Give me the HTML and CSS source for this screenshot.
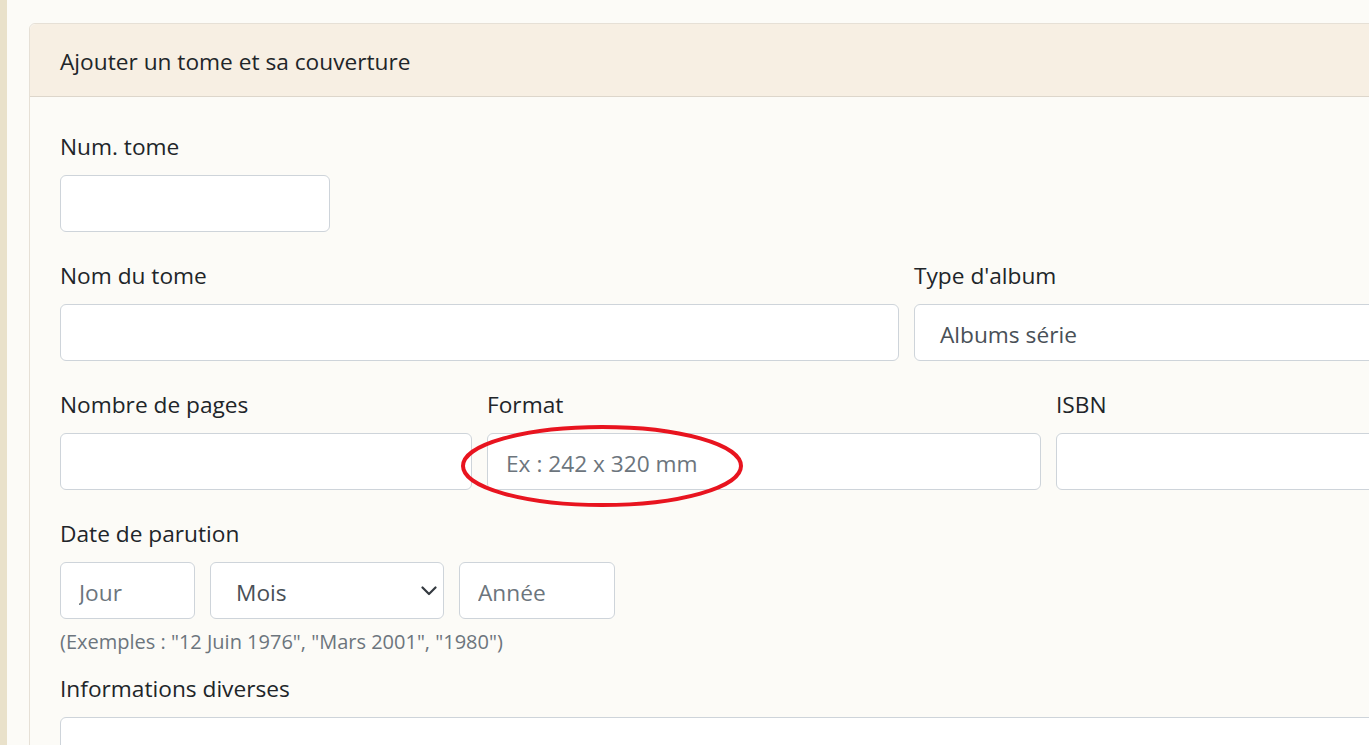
FILE: index.html
```html
<!DOCTYPE html>
<html lang="fr">
<head>
<meta charset="utf-8">
<title>Ajouter un tome</title>
<link rel="stylesheet" href="styles.css">
</head>
<body>
<div class="page">
  <div class="strip"></div>
  <main class="content">
    <section class="card">
      <header class="card-header">Ajouter un tome et sa couverture</header>
      <div class="card-body">
        <div class="group">
          <label class="label">Num. tome</label>
          <input class="control w-num" type="text">
        </div>
        <div class="row row-2">
          <div class="group">
            <label class="label">Nom du tome</label>
            <input class="control" type="text">
          </div>
          <div class="group">
            <label class="label">Type d'album</label>
            <div class="control select-like">Albums série</div>
          </div>
        </div>
        <div class="row row-3">
          <div class="group">
            <label class="label">Nombre de pages</label>
            <input class="control" type="text">
          </div>
          <div class="group">
            <label class="label">Format</label>
            <input class="control" type="text" placeholder="Ex : 242 x 320 mm">
          </div>
          <div class="group">
            <label class="label">ISBN</label>
            <input class="control" type="text">
          </div>
        </div>
        <div class="group group-date">
          <label class="label">Date de parution</label>
          <div class="date-row">
            <input class="control w-jour" type="text" placeholder="Jour">
            <div class="control select-like w-mois">
              <span>Mois</span>
              <svg class="chev" width="16" height="10" viewBox="0 0 16 10"><path d="M1.5 1.5 L8 8 L14.5 1.5" fill="none" stroke="#343a40" stroke-width="2.2" stroke-linecap="round" stroke-linejoin="round"/></svg>
            </div>
            <input class="control w-annee" type="text" placeholder="Année">
          </div>
          <small class="help">(Exemples : "12 Juin 1976", "Mars 2001", "1980")</small>
        </div>
        <div class="group">
          <label class="label">Informations diverses</label>
          <textarea class="control area"></textarea>
        </div>
      </div>
    </section>
  </main>
</div>
<svg class="annot" width="300" height="100" viewBox="0 0 300 100">
  <ellipse cx="145" cy="44" rx="139" ry="39" fill="none" stroke="#e8141f" stroke-width="4"/>
</svg>
</body>
</html>
```

FILE: styles.css
```css
html, body {
  margin: 0;
  padding: 0;
  background: #fcfbf7;
  overflow: hidden;
  height: 745px;
}
body {
  font-family: "Open Sans", "Noto Sans", sans-serif;
  font-size: 22.7px;
  color: #212529;
  position: relative;
}
.page {
  display: flex;
  min-height: 745px;
}
.strip {
  width: 7px;
  flex: 0 0 7px;
  background: #e9e1ca;
}
.content {
  padding: 23px 0 0 22px;
  flex: 0 0 auto;
}
.card {
  width: 1500px;
  border: 1px solid #e6e0d6;
  border-radius: 6px;
  background: #fcfbf7;
}
.card-header {
  background: #f7efe3;
  border-bottom: 1px solid #ddd6cb;
  border-radius: 6px 6px 0 0;
  padding: 20px 30px 16px;
  line-height: 36px;
  height: 36px;
  font-size: 22.7px;
}
.card-body {
  padding: 30px 30px;
}
.group {
  display: flex;
  flex-direction: column;
  margin-bottom: 24px;
}
.group-date {
  margin-bottom: 14px;
}
.label {
  box-sizing: border-box;
  padding-top: 4px;
  line-height: 32px;
  height: 36px;
  margin-bottom: 12px;
}
.control {
  box-sizing: border-box;
  height: 57px;
  border: 1px solid #ced4da;
  border-radius: 6px;
  background: #fff;
  font-family: inherit;
  font-size: 22.7px;
  color: #495057;
  padding: 4px 18px 0;
  outline: none;
  margin: 0;
}
.control::placeholder {
  color: #6c757d;
  opacity: 1;
}
.select-like {
  display: flex;
  align-items: center;
  justify-content: space-between;
  padding: 4px 6px 0 25px;
}
.w-num { width: 270px; }
.row {
  display: grid;
  column-gap: 15px;
}
.row-2 { grid-template-columns: 839px 500px; }
.row-3 { grid-template-columns: 412px 554px 400px; }
.date-row {
  display: flex;
  gap: 15px;
}
.w-jour { width: 135px; }
.w-mois { width: 234px; }
.w-annee { width: 156px; }
.chev {
  display: block;
  margin-top: -4px;
}
.help {
  margin-top: 10px;
  font-size: 20px;
  line-height: 26px;
  color: #6c757d;
}
.area {
  height: 120px;
  resize: none;
}
.annot {
  position: absolute;
  left: 457px;
  top: 422px;
  pointer-events: none;
}
```
